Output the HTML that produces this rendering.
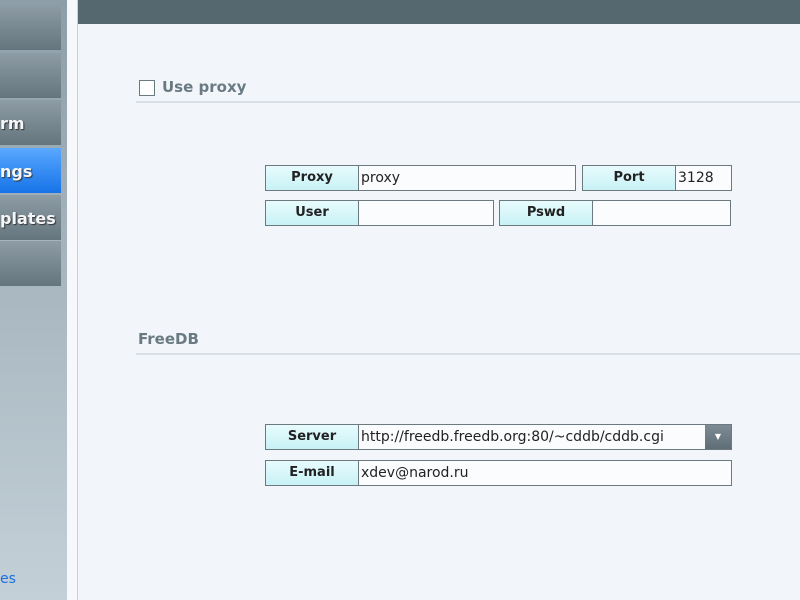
<!DOCTYPE html>
<html><head><meta charset="utf-8"><style>
body{margin:0;width:800px;height:600px;overflow:hidden;background:#f2f5fa;font-family:"DejaVu Sans","Liberation Sans",sans-serif;position:relative}
#side{position:absolute;left:0;top:0;width:67px;height:600px;background:linear-gradient(#8e9ea8,#a9b8c1 50%,#c4d0d8)}
.b{position:absolute;left:0;width:61px;height:45px;background:linear-gradient(#8d9ca5,#65757e);color:#f4f6f8;font-weight:bold;font-size:16px;line-height:47px;text-shadow:1px 1px 1px #333;text-align:left;box-sizing:border-box;overflow:hidden;white-space:nowrap}
.b.sel{background:linear-gradient(#5aa8ff,#1673e8)}
#strip{position:absolute;left:67px;top:0;width:10px;height:600px;background:#f6f8fb;border-right:1px solid #c8d0d6}
#hdr{position:absolute;left:78px;top:0;width:722px;height:24px;background:#56686f}
.t{position:absolute;font-weight:bold;font-size:15px;color:#6a7a82}
.line{position:absolute;left:136px;width:664px;height:2px;background:#d8e0e6}
.l{position:absolute;height:26px;box-sizing:border-box;border:1px solid #6c7a80;background:linear-gradient(#e8fbfd,#c8f2f6);font-weight:bold;font-size:13px;text-align:center;line-height:24px;color:#222}
.i{position:absolute;height:26px;box-sizing:border-box;border:1px solid #6c7a80;background:#fafcfd;font-size:14px;line-height:25px;padding-left:2px;color:#222;white-space:nowrap;overflow:hidden}
</style></head><body>
<div id="side">
<div class="b" style="top:5px"></div>
<div class="b" style="top:53px"></div>
<div class="b" style="top:100px">rm</div>
<div class="b sel" style="top:148px">ngs</div>
<div class="b" style="top:195px">plates</div>
<div class="b" style="top:241px"></div>
<div style="position:absolute;left:0;top:571px;color:#1a6fe0;font-size:14px">es</div>
</div>
<div id="strip"></div>
<div id="hdr"></div>
<div style="position:absolute;left:139px;top:80px;width:14px;height:14px;border:1px solid #6a7a82;background:#fff"></div>
<div class="t" style="left:162px;top:78px">Use proxy</div>
<div class="line" style="top:101px"></div>
<div class="l" style="left:265px;top:165px;width:94px">Proxy</div>
<div class="i" style="left:358px;top:165px;width:218px">proxy</div>
<div class="l" style="left:582px;top:165px;width:94px">Port</div>
<div class="i" style="left:675px;top:165px;width:57px">3128</div>
<div class="l" style="left:265px;top:200px;width:94px">User</div>
<div class="i" style="left:358px;top:200px;width:136px"></div>
<div class="l" style="left:499px;top:200px;width:94px">Pswd</div>
<div class="i" style="left:592px;top:200px;width:139px"></div>
<div class="t" style="left:138px;top:330px">FreeDB</div>
<div class="line" style="top:353px"></div>
<div class="l" style="left:265px;top:424px;width:94px">Server</div>
<div class="i" style="left:358px;top:424px;width:374px">http://freedb.freedb.org:80/~cddb/cddb.cgi</div>
<div style="position:absolute;left:705px;top:425px;width:26px;height:24px;background:linear-gradient(#7d8c94,#5f6e76);color:#fff;font-size:8px;text-align:center;line-height:24px">▼</div>
<div class="l" style="left:265px;top:460px;width:94px">E-mail</div>
<div class="i" style="left:358px;top:460px;width:374px">xdev@narod.ru</div>
</body></html>
